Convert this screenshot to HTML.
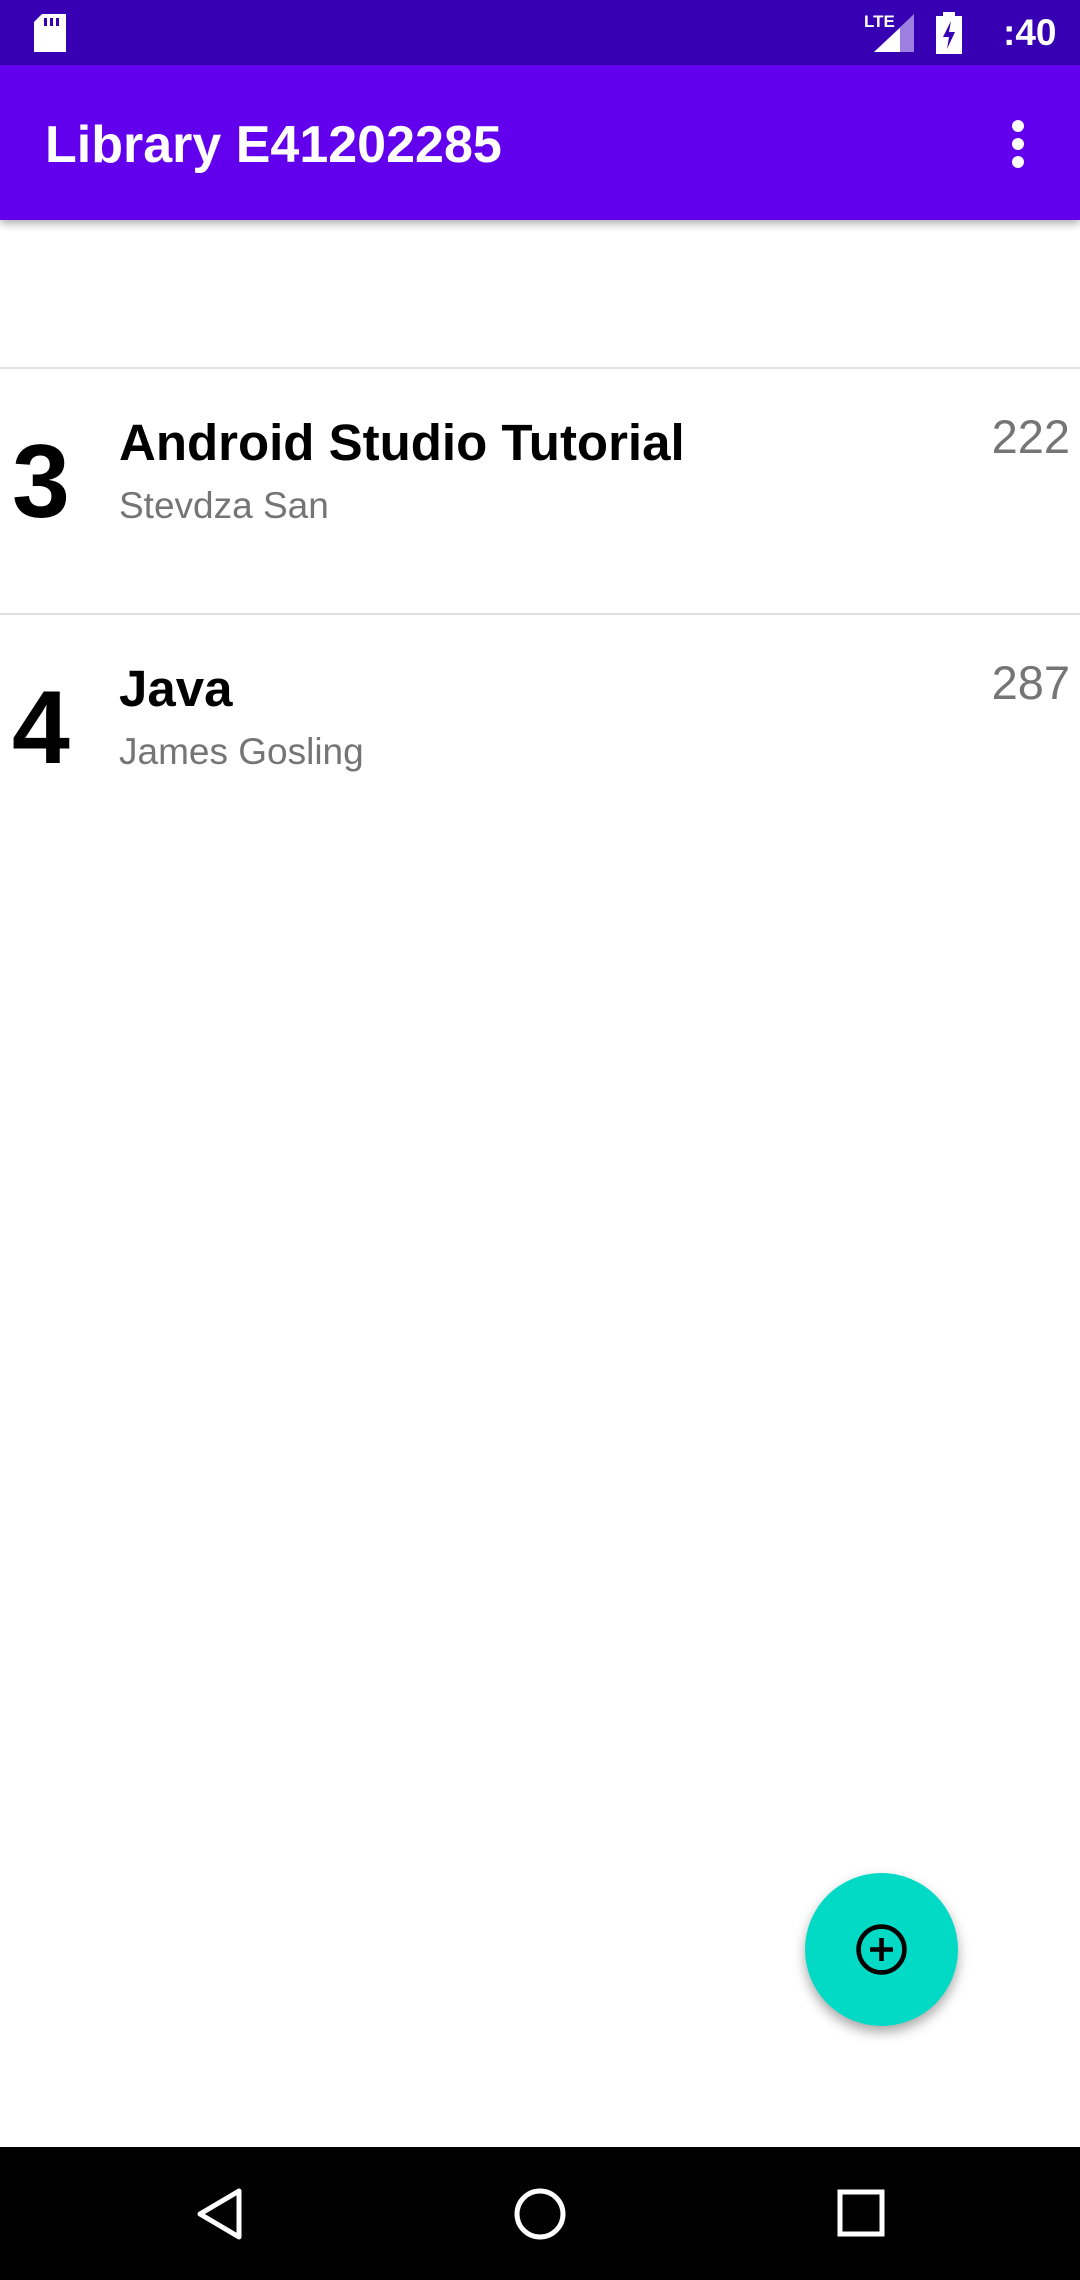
<!DOCTYPE html>
<html><head><meta charset="utf-8"><style>
*{margin:0;padding:0;box-sizing:border-box}
body{width:1080px;height:2280px;position:relative;background:#fff;font-family:"Liberation Sans",sans-serif;overflow:hidden}
.sb{position:absolute;left:0;top:0;width:1080px;height:65px;background:#3700B3}
.ab{position:absolute;left:0;top:65px;width:1080px;height:155px;background:#6200EE;box-shadow:0 4px 8px rgba(0,0,0,.3)}
.title{position:absolute;left:45px;top:114px;color:#fff;font-size:52px;font-weight:bold;line-height:62px}
.div{position:absolute;left:0;width:1080px;height:2px;background:#e0e0e0}
.num{position:absolute;left:12px;font-size:104px;font-weight:bold;line-height:100px;color:#000}
.t{position:absolute;left:119px;font-size:51px;font-weight:bold;color:#000;line-height:60px}
.s{position:absolute;left:119px;font-size:37px;color:#757575;line-height:44px}
.p{position:absolute;right:10px;font-size:47px;color:#757575;line-height:56px}
.fab{position:absolute;left:805px;top:1873px;width:153px;height:153px;border-radius:50%;background:#03DAC5;box-shadow:0 6px 12px rgba(0,0,0,.35)}
.nav{position:absolute;left:0;top:2147px;width:1080px;height:133px;background:#000}
</style></head><body>
<div class="sb">
<svg style="position:absolute;left:34px;top:14px" width="32" height="38" viewBox="0 0 32 38"><path d="M8 0h24v38H0V8z" fill="#fff"/><rect x="10" y="4" width="3" height="8" fill="#3700B3"/><rect x="16" y="4" width="3" height="8" fill="#3700B3"/><rect x="22" y="4" width="3" height="8" fill="#3700B3"/></svg>
<div style="position:absolute;left:864px;top:12px;color:#fff;font-size:17px;font-weight:bold">LTE</div>
<svg style="position:absolute;left:874px;top:14px" width="40" height="38"><path d="M40 0V38H0z" fill="#9c7fe0"/><path d="M26 14V38H0z" fill="#fff"/></svg>
<svg style="position:absolute;left:936px;top:12px" width="26" height="42"><rect x="7" y="0" width="12" height="5" fill="#fff"/><rect x="0" y="4" width="26" height="38" fill="#fff"/><path d="M15 9l-8 16h6l-2 12 8-17h-6z" fill="#3700B3"/></svg>
<div style="position:absolute;left:1003px;top:12px;color:#fff;font-size:37px;font-weight:600">:40</div>
</div>
<div class="ab"><svg style="position:absolute;left:1010px;top:55px" width="16" height="48"><circle cx="8" cy="6" r="6" fill="#fff"/><circle cx="8" cy="24" r="6" fill="#fff"/><circle cx="8" cy="42" r="6" fill="#fff"/></svg></div>
<div class="title">Library E41202285</div>
<div class="div" style="top:367px"></div>
<div class="num" style="top:432px">3</div>
<div class="t" style="top:413px">Android Studio Tutorial</div>
<div class="s" style="top:484px">Stevdza San</div>
<div class="p" style="top:409px">222</div>
<div class="div" style="top:613px"></div>
<div class="num" style="top:678px">4</div>
<div class="t" style="top:659px">Java</div>
<div class="s" style="top:730px">James Gosling</div>
<div class="p" style="top:655px">287</div>
<div class="fab"><svg style="position:absolute;left:49px;top:49px" width="55" height="55" viewBox="0 0 24 24"><circle cx="12" cy="12" r="10" fill="none" stroke="#000" stroke-width="2"/><path d="M12 7v10M7 12h10" stroke="#000" stroke-width="2"/></svg></div>
<div class="nav">
<svg style="position:absolute;left:195px;top:40px" width="50" height="54"><path d="M44 4V50L5 27z" fill="none" stroke="#fff" stroke-width="5" stroke-linejoin="round"/></svg>
<svg style="position:absolute;left:513px;top:40px" width="54" height="54"><circle cx="27" cy="27" r="23" fill="none" stroke="#fff" stroke-width="5"/></svg>
<svg style="position:absolute;left:837px;top:42px" width="48" height="48"><rect x="3" y="3" width="42" height="42" fill="none" stroke="#fff" stroke-width="5"/></svg>
</div>
</body></html>
